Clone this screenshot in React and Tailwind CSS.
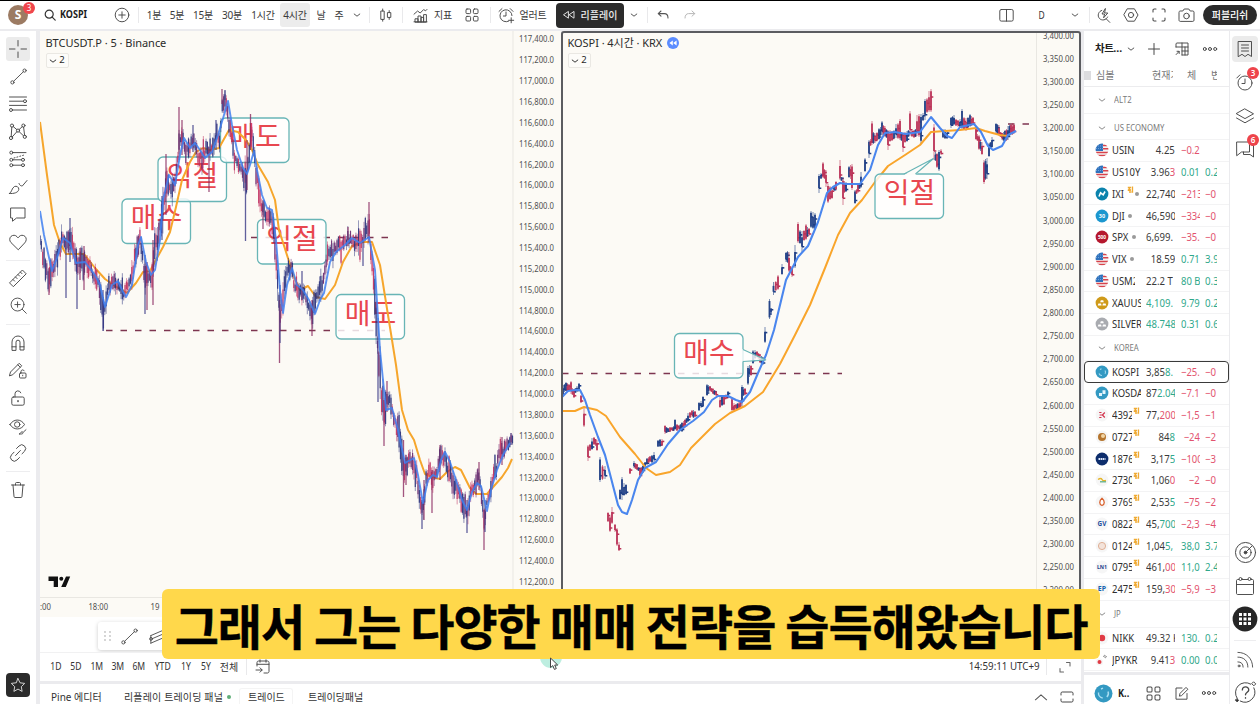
import React from "react";

const UI = "font-['Noto_Sans','Noto_Sans_CJK_KR',sans-serif]";
const NAVY = "#1f3f86";
const RED = "#bb3358";

/* ---------- helpers ---------- */
function Ico({ s = 20, w = 0.95, c = "#484848", children, vb = 20, fill = "none" }) {
  return (
    <svg width={s} height={s} viewBox={`0 0 ${vb} ${vb}`} fill={fill} stroke={c} strokeWidth={w} strokeLinecap="round" strokeLinejoin="round" className="shrink-0">
      {children}
    </svg>
  );
}
const Chevron = ({ s = 8, up = false, c = "#555", w = 1 }) => (
  <Ico s={s} vb={8} w={w} c={c}>
    <path d={up ? "M0.8 5.6 4 2.8 7.2 5.6" : "M1.200 3 4 5.2 6.800 3"} />
  </Ico>
);
const Cell = ({ w, children, className = "" }) => (
  <div className={`flex shrink-0 items-center justify-center ${w} ${className}`}>{children}</div>
);
const Sep = ({ w, at = "justify-center" }) => (
  <div className={`flex h-[16px] shrink-0 ${at} ${w}`}>
    <div className="w-px bg-[#e9e9eb]" />
  </div>
);
const Four = ({ s = 14 }) => (
  <Ico s={s} vb={14} w={0.95}>
    <rect x="1" y="1" width="4.6" height="4.6" rx="1" />
    <rect x="8.4" y="1" width="4.6" height="4.6" rx="1" />
    <rect x="1" y="8.4" width="4.6" height="4.6" rx="1" />
    <rect x="8.4" y="8.4" width="4.6" height="4.6" rx="1" />
  </Ico>
);
const Dots = () => (
  <Ico s={16} vb={16} w={1}>
    <circle cx="2.8" cy="8" r="1.5" />
    <circle cx="8" cy="8" r="1.5" />
    <circle cx="13.2" cy="8" r="1.5" />
  </Ico>
);

/* ---------- header ---------- */
function Header() {
  const t = "text-[10px] text-[#3a3a3a] whitespace-nowrap tracking-[-0.2px]";
  return (
    <header className="flex h-[28px] shrink-0 items-center bg-white">
      <Cell w="w-[36px]" className="relative">
        <div className="flex h-[20px] w-[20px] items-center justify-center rounded-full bg-[#9c7b63] text-[12px] font-bold text-white">S</div>
        <div className="absolute top-[-3px] left-[23px] flex h-[12px] w-[12px] items-center justify-center rounded-full bg-[#f0464c] text-[8px] text-white">3</div>
      </Cell>
      <div className="flex w-[70px] shrink-0 items-center pl-[8px]">
        <Ico s={12} vb={12} w={1.2} c="#333">
          <circle cx="5.2" cy="5.2" r="4" />
          <path d="m8.2 8.2 3 3" />
        </Ico>
        <span className="ml-[4px] origin-left scale-x-[.86] text-[10.5px] font-bold text-[#1d1d1d]">KOSPI</span>
      </div>
      <Cell w="w-[32px]">
        <Ico s={16} vb={16}>
          <circle cx="8" cy="8" r="6.8" />
          <path d="M8 4.8v6.4M4.8 8h6.4" />
        </Ico>
      </Cell>
      <Sep w="w-[4px]" at="justify-start" />
      <Cell w="w-[24px]" className={t}>1분</Cell>
      <Cell w="w-[22px]" className={t}>5분</Cell>
      <Cell w="w-[30px]" className={t}>15분</Cell>
      <Cell w="w-[28px]" className={t}>30분</Cell>
      <Cell w="w-[34px]" className={t}>1시간</Cell>
      <Cell w="w-[30px]" className={`${t} h-[24px] rounded-[3px] bg-[#ececec]`}>4시간</Cell>
      <Cell w="w-[22px]" className={t}>날</Cell>
      <Cell w="w-[14px]" className={t}>주</Cell>
      <Cell w="w-[22px]"><Chevron /></Cell>
      <Sep w="w-[2px]" />
      <Cell w="w-[32px]">
        <Ico s={14} vb={14}>
          <rect x="2.2" y="3" width="3" height="8.4" />
          <path d="M3.7 1v2M3.7 11.4v1.8M10.2 2.6v2M10.2 9.4v2" />
          <rect x="8.8" y="4.6" width="3" height="4.8" />
        </Ico>
      </Cell>
      <Sep w="w-[6px]" at="justify-start" />
      <Cell w="w-[24px]">
        <Ico s={15} vb={15}>
          <path d="M1 6.2 4.6 3l2.6 2 3.4-3.4 2 1.2L14 1.4" />
          <path d="M2 13.8v-3h3v3zM5 13.8V8h3v5.8zM8 13.8V9.4h2.6v4.4zM10.6 13.8V6.6h2.8v7.2zM1 13.8h13" />
        </Ico>
      </Cell>
      <Cell w="w-[22px]" className={t}>지표</Cell>
      <Cell w="w-[36px]"><Four /></Cell>
      <Sep w="w-[4px]" at="justify-start" />
      <Cell w="w-[24px]">
        <Ico s={17} vb={17}>
          <path d="M10.6 14.2A6 6 0 1 1 14 8.6" />
          <path d="M8 5v4H5.4M1 4.4 4 1.6M12.200 1.6 15 4.4M13.200 10.8v5M10.7 13.300h5" />
        </Ico>
      </Cell>
      <Cell w="w-[30px]" className={t}>얼러트</Cell>
      <div className="ml-[8px] flex h-[25px] w-[68px] shrink-0 items-center justify-center gap-[6px] rounded-[4px] bg-[#2b2b2b]">
        <Ico s={12} vb={12} w={1} c="#e0e0e0">
          <path d="M5.4 2.8v6.4L.8 6zM11 2.8v6.4L6.4 6z" />
        </Ico>
        <span className="text-[10px] font-medium whitespace-nowrap text-[#ececec]">리플레이</span>
      </div>
      <Cell w="w-[20px]"><Chevron /></Cell>
      <Sep w="w-[4px]" at="justify-end" />
      <Cell w="w-[30px]">
        <Ico s={12} vb={12} w={1.05} c="#555">
          <path d="M4 2 1.2 4.6 4 7.2M1.2 4.6h6.2c2.2 0 3.6 1.6 3.6 4.4" />
        </Ico>
      </Cell>
      <Cell w="w-[24px]">
        <Ico s={12} vb={12} w={1} c="#b8b8b8">
          <path d="m8 2 2.8 2.6L8 7.2M10.8 4.6H4.6C2.4 4.6 1 6.2 1 9" />
        </Ico>
      </Cell>
      <div className="flex-1" />
      <Cell w="w-[32px]">
        <Ico s={15} vb={15}>
          <rect x=".8" y="1.5" width="13.4" height="11.6" rx="1.5" />
          <path d="M7.5 1.5v11.6" />
        </Ico>
      </Cell>
      <Cell w="w-[40px]" className="text-[10px] text-[#333]"><span className="scale-x-[.85]">D</span></Cell>
      <Cell w="w-[26px]"><Chevron /></Cell>
      <Sep w="w-[2px]" />
      <Cell w="w-[27px]">
        <Ico s={15} vb={15}>
          <path d="M5.8 2.4a4.900 4.900 0 1 0 5.800 6.600M10.2 10.8l3.6 3.6" />
          <path d="M9.2.8 6 6h2.600L7.600 9.800 11.800 5H9z" />
        </Ico>
      </Cell>
      <Cell w="w-[28px]">
        <Ico s={16} vb={16}>
          <path d="M4.6 1.8h6.8L15 8l-3.600 6.200H4.600L1 8z" />
          <circle cx="8" cy="8" r="2.6" />
        </Ico>
      </Cell>
      <Cell w="w-[28px]">
        <Ico s={14} vb={14} w={1.05}>
          <path d="M1 4V2.2C1 1.5 1.5 1 2.2 1H4M10 1h1.8c.7 0 1.200.5 1.200 1.200V4M13 10v1.800c0 .7-.5 1.200-1.200 1.200H10M4 13H2.200C1.500 13 1 12.500 1 11.800V10" />
        </Ico>
      </Cell>
      <Cell w="w-[26px]">
        <Ico s={17} vb={17}>
          <path d="M1 5.200c0-.7.5-1.200 1.200-1.200h2.600l1.400-2h4.600l1.400 2h2.600c.7 0 1.200.5 1.200 1.200v8c0 .7-.5 1.200-1.200 1.200H2.200c-.7 0-1.200-.5-1.200-1.200z" />
          <circle cx="8.5" cy="9" r="2.8" />
        </Ico>
      </Cell>
      <div className="mr-[3px] ml-[4px] flex h-[20px] w-[54px] shrink-0 items-center justify-center rounded-full bg-[#2b2b2b] text-[10px] font-medium tracking-[-0.1px] whitespace-nowrap text-white">퍼블리쉬</div>
    </header>
  );
}

/* ---------- drawing tools rail ---------- */
const Tool = ({ children, active = false }) => (
  <div className="flex h-[27.5px] w-[36px] shrink-0 items-center justify-center">
    <div className={`flex h-[24px] w-[24px] items-center justify-center rounded-[3px] ${active ? "bg-[#ebebeb]" : ""}`}>{children}</div>
  </div>
);
const RailSep = ({ h }) => (
  <div className={`flex w-[36px] shrink-0 items-center justify-center ${h}`}>
    <div className="h-px w-[24px] bg-[#ededef]" />
  </div>
);
function LeftRail() {
  return (
    <aside className="flex w-[36px] shrink-0 flex-col bg-white pt-[4.5px]">
      <Tool active><Ico><path d="M10 1.5v5.500M10 13v5.500M1.500 10H7M13 10h5.500" /></Ico></Tool>
      <Tool><Ico s={19}><circle cx="3.6" cy="16.2" r="1.7" /><circle cx="16.4" cy="3.8" r="1.7" /><path d="M4.9 15 15.1 5" /></Ico></Tool>
      <Tool><Ico><path d="M1.5 3h17M1.5 7.2h13.8M1.5 11.4h17M4.7 16h13.8" /><circle cx="17" cy="7.2" r="1.5" /><circle cx="3" cy="16" r="1.5" /></Ico></Tool>
      <Tool><Ico><circle cx="4" cy="3.6" r="1.6" /><circle cx="10" cy="8.6" r="1.6" /><circle cx="15.4" cy="3.6" r="1.6" /><circle cx="3" cy="16" r="1.6" /><circle cx="16.8" cy="14.8" r="1.6" /><path d="M3.8 5.2 3.2 14.4M5.3 4.6l3.5 3M11.2 7.5l3.1-2.9M15.6 5.2l1 8M4.2 14.9l4.7-5.2M11.2 9.7l4.3 4.1" /></Ico></Tool>
      <Tool><Ico><path d="M5 3.6h13M5 10.800h8.500M5 16.200h8.500" /><path d="M6 9 15.500 6.200" strokeDasharray="1 2" /><circle cx="3.3" cy="3.6" r="1.5" /><circle cx="3.3" cy="10.8" r="1.5" /><circle cx="3.3" cy="16.2" r="1.5" /><circle cx="15" cy="10.8" r="1.5" /><circle cx="15" cy="16.200" r="1.5" /></Ico></Tool>
      <Tool><Ico><path d="M1.5 16.500C4 15.500 3.500 11 6.500 9.500c2-.9 4.500.6 4.300 2.800-.4 3.400-5 4.500-9.300 4.200zM11 6.500c.8 2 1.900 2.600 3.400 2.400L19 3.500" /></Ico></Tool>
      <Tool><Ico><path d="M3 4h14v10H8.500L4.500 17.200V14H3z" /></Ico></Tool>
      <Tool><Ico><path d="M10 17.500 3 10.600C1.300 8.800 1.300 6 3 4.400c1.800-1.600 4.500-1.500 6 .3l1 1.200 1-1.200c1.500-1.800 4.200-1.900 6-.3 1.700 1.600 1.700 4.400 0 6.200z" /></Ico></Tool>
      <RailSep h="h-[9px]" />
      <Tool><Ico><path d="M1.8 14.600 14.400 2l3.800 3.800L5.600 18.400zM5 11.500l1.600 1.600M7.500 9l1.600 1.600M10 6.500l1.600 1.600M12.400 4.100 14 5.700" /></Ico></Tool>
      <Tool><Ico s={19}><circle cx="9" cy="9" r="6.8" /><path d="M14 14l4.200 4.200M9 6.200v5.600M6.200 9h5.600" /></Ico></Tool>
      <RailSep h="h-[10px]" />
      <Tool><Ico><path d="M4 17V9a6 6 0 0 1 12 0v8h-4V9.200a2 2 0 0 0-4 0V17zM4 13.800h4M12 13.800h4" /></Ico></Tool>
      <Tool><Ico><path d="M1.500 14.500 2.500 11 11.200 2.300l2.500 2.500L5 13.500zM9.800 3.800l2.500 2.500" /><rect x="11.5" y="12" width="6.5" height="5" rx="1" /><path d="M13 12v-1.600a1.700 1.700 0 0 1 3.200-.6M14.700 14.200v.6" /></Ico></Tool>
      <Tool><Ico><rect x="3.8" y="9" width="12.4" height="8.2" rx="1.5" /><path d="M7 9V5.800a3 3 0 0 1 5.800-1" /><path d="M10 12.800v.8" strokeWidth="1.500" /></Ico></Tool>
      <Tool><Ico><path d="M2 8.500C5.500 2.500 13 2.500 16.500 8.500 13 14.500 5.500 14.500 2 8.500z" /><circle cx="9.2" cy="8.5" r="2.7" /><path d="M11.500 18c1.200-.2 1-2 2.400-2.200.9 0 1.500.8 1.100 1.400-.6.900-2 .9-3.500.8zM15.500 16l2.500-2.300" /></Ico></Tool>
      <Tool><Ico><path d="M8.500 5.500 11 3a3.700 3.700 0 0 1 5.500 5.300L14 10.800M11.500 14.500 9 17a3.700 3.700 0 0 1-5.400-5.300L6 9.200M7.600 12.500l4.800-5" /></Ico></Tool>
      <RailSep h="h-[9px]" />
      <Tool><Ico><path d="M3.500 5h13M7.500 5V3.500c0-.6.4-1 1-1h3c.6 0 1 .4 1 1V5M5 5l1 11.500c0 .6.4 1 1 1h6c.6 0 1-.4 1-1L15 5" /></Ico></Tool>
      <div className="mt-auto mb-[7px] flex justify-center">
        <div className="flex h-[24px] w-[24px] items-center justify-center rounded-[4px] bg-[#2b2b2b]">
          <Ico s={16} vb={16} c="#d8d8d8"><path d="m8 1.500 2 4.300 4.700.6-3.400 3.300.8 4.700L8 12.100l-4.100 2.300.8-4.700L1.300 6.400 6 5.800z" /></Ico>
        </div>
      </div>
    </aside>
  );
}

/* ---------- chart data ---------- */
const range5m = [
  [40,230,250],[45,252,280],[49,262,296],[52,258,282],[57,245,275],[62,224,250],[66,236,250],[70,222,255],[74,240,265],[78,250,285],[84,246,272],[90,254,280],[94,262,290],[98,268,292],[101,282,318],[103,298,331],[106,285,318],[109,276,300],[114,270,292],[119,278,296],[124,284,306],[128,276,295],[132,264,288],[136,240,270],[140,226,252],[143,250,275],[146,262,300],[149,268,282],[152,262,290],[154,238,270],[158,225,250],[162,195,235],[165,163,208],[168,172,200],[172,176,206],[176,168,192],[179,118,160],[182,128,152],[186,142,165],[190,136,156],[193,128,150],[197,142,165],[202,148,172],[207,138,162],[212,142,160],[216,124,148],[220,128,145],[223,89,110],[226,94,118],[230,116,138],[233,138,162],[238,156,175],[243,162,182],[246,160,200],[249,140,165],[251,118,142],[254,138,160],[257,165,198],[261,190,218],[265,202,226],[270,207,226],[274,216,248],[278,262,312],[280,292,340],[283,270,315],[287,256,290],[291,254,278],[295,276,300],[300,282,303],[305,286,305],[309,296,318],[312,302,330],[315,286,312],[319,282,310],[323,272,294],[326,250,272],[330,242,262],[336,238,256],[342,236,252],[348,232,248],[354,232,250],[360,230,255],[365,228,245],[369,208,242],[372,242,285],[375,272,330],[378,322,388],[381,370,422],[384,396,442],[387,382,412],[390,388,418],[394,405,430],[398,412,445],[402,430,475],[405,455,492],[409,446,470],[413,450,475],[417,465,496],[420,490,520],[423,492,525],[426,470,490],[429,456,480],[432,464,495],[436,468,480],[440,446,470],[445,448,465],[449,456,488],[453,470,500],[458,480,505],[463,490,520],[467,500,528],[471,480,505],[475,474,495],[479,466,488],[482,480,518],[484,500,538],[487,495,512],[491,475,500],[495,460,484],[500,442,465],[505,440,458],[510,435,448],[513,434,442],
];
const wicks5m = [[49,268,295,1],[66,248,298,0],[70,218,262,0],[77,262,309,0],[80,248,280,1],[84,246,290,1],[103,290,331,0],[145,255,314,0],[147,262,310,1],[153,240,305,1],[162,196,240,0],[166,154,215,1],[179,107,160,1],[182,120,155,1],[193,125,152,0],[209,150,192,1],[216,120,150,0],[222,89,104,1],[225,90,100,0],[245.5,168,241,0],[247,140,190,1],[250.5,114,150,1],[263,200,229,1],[279.5,300,363,1],[280,285,343,0],[302,271,300,0],[312,300,336,1],[348,227,246,1],[369,202,242,1],[363,240,266,0],[378,318,402,0],[384,400,446,1],[387,381,412,1],[403.5,440,497,1],[406,455,485,1],[422,500,529,0],[424,480,520,1],[432,470,513,1],[440,445,480,1],[467,500,533,0],[479,462,490,1],[484,510,550,1],[485,500,532,0],[502,437,465,1],[511,433,445,0]];

function buildBars() {
  let seed = 17;
  const rnd = () => ((seed = (seed * 16807) % 2147483647), seed / 2147483647);
  const out = [];
  let i = 0;
  for (let x = 40; x < 513; x += 1.35) {
    while (i < range5m.length - 2 && range5m[i + 1][0] < x) i++;
    const a = range5m[i], b = range5m[i + 1];
    const f = (x - a[0]) / (b[0] - a[0]);
    const hi = a[1] + (b[1] - a[1]) * f, lo = a[2] + (b[2] - a[2]) * f, len = lo - hi;
    const spike = rnd() > 0.82 ? 4 + rnd() * 8 : 0;
    const side = rnd() > 0.5;
    const top = hi - 2 + len * rnd() * 0.42 - (side ? spike : 0);
    const bot = lo + 2 - len * rnd() * 0.42 + (side ? 0 : spike);
    const q = (bot - top) * (0.05 + rnd() * 0.28);
    const k = rnd();
    out.push({ x, top, bot, bt: top + q * 0.8, bb: bot - q, c: k > 0.6 ? "#29307c" : k > 0.35 ? "#6a2a70" : "#c02f60" });
  }
  return out;
}
const bars5m = buildBars();

const day4h = [
  [563,385,397,0],[566,382,391,0],[569,384,391,1],[571,381,394,1],[574,389,398,1],[577,386,392,0],[579,383,391,0],[581,395,403,1],[584,408,427,1],[588,445,461,1],[592,438,450,0],[594,437,445,1],[597,440,451,1],[600,457,482,0],[605,466,479,0],[608,512,522,1],[610,516,532,1],[612,507,524,1],[615,524,532,1],[617,528,546,1],[619,542,551,1],[620,489,500,0],[622,477,500,0],[626,484,495,0],[630,468,474,1],[634,461,468,0],[637,464,470,1],[640,468,478,1],[643,463,473,0],[647,458,465,0],[650,456,462,1],[654,452,462,0],[658,440,447,0],[662,439,446,1],[665,425,434,1],[668,428,432,0],[672,427,431,1],[675,419,430,0],[679,425,430,1],[682,422,432,0],[685,419,428,1],[688,413,422,0],[692,410,417,1],[695,411,417,1],[699,402,411,0],[703,396,407,0],[707,384,396,0],[710,386,391,1],[713,389,394,1],[716,391,396,1],[720,397,408,1],[724,395,405,1],[728,391,398,0],[732,398,411,1],[736,404,410,1],[739,401,409,1],[742,385,406,0],[745,388,395,1],[748,366,385,0],[751,365,376,1],[753,350,364,0],[757,351,358,1],[760,354,363,1],[763,357,365,0],[765,327,343,0],[769.5,299,319,0],[771,308,313,0],[773.5,282,295,0],[778,275,290,1],[782,264,275,0],[786,252,262,0],[789,252,272,1],[792,268,277,1],[795,245,268,0],[798,222,243,1],[802,231,252,0],[806,224,240,1],[809,228,236,1],[811,211,228,0],[815,213,230,0],[819,174,193,0],[823,162,178,1],[826,170,187,1],[828,184,203,1],[832,187,199,1],[836,181,190,1],[840,160,180,1],[843,178,205,1],[846,182,192,0],[849,166,178,0],[852,164,190,1],[855,190,204,0],[858,184,193,1],[861,172,188,0],[865,158,172,0],[869,140,158,0],[872,121,145,1],[875,133,143,1],[879,128,140,0],[882,121,135,0],[885,126,137,1],[888,130,150,1],[892,131,141,1],[896,124,138,0],[900,119,140,1],[903,133,152,1],[907,131,142,0],[910,111,136,1],[914,130,138,1],[917,115,136,1],[921,114,143,0],[925,99,120,0],[929,91,112,1],[931,89,112,1],[934,124,160,1],[937,153,168,1],[939,150,171,0],[941,149,155,1],[943,129,138,0],[947,130,139,0],[951,117,128,0],[954,115,125,0],[958,120,127,1],[962,109,129,0],[966,118,131,1],[970,114,127,0],[973,117,125,1],[976,126,140,1],[979,135,150,1],[982,142,155,1],[984,160,184,1],[987,158,179,0],[989,143,157,0],[992,137,147,0],[996,123,134,0],[999,125,136,1],[1002,133,140,1],[1005,130,141,0],[1008,126,140,0],[1011,124,135,1],[1014,124,134,1],
];
/* a second session bar wherever two neighbouring ranges meet */
const bars4h = day4h.flatMap((b, i) => {
  const n = day4h[i + 1];
  if (!n || n[0] - b[0] < 3) return [b];
  const hi = Math.max(b[1], n[1]), lo = Math.min(b[2], n[2]);
  if (lo - hi < 2) return [b];
  return [b, [(b[0] + n[0]) / 2, hi - 1, lo + 1, i % 2]];
});

const P = (s) => "M" + s;
const orangeA = P("40 122 47 175 54 225 60 243 66 254 84 254 95 268 105 279 115 286 127 293 136 283 143 272 150 271 157 258 163 247 170 232 176 207 182 180 190 162 196 152 203 148 210 150 219 148 229 130 238 132 246 140 252 150 258 165 268 182 275 200 279 230 286 252 294 277 300 290 308 286 316 297 325 299 335 285 343 262 352 246 362 242 372 242 380 265 388 315 396 365 402 410 408 430 414 440 420 460 425 474 432 477 440 479 447 472 455 467 461 470 470 488 476 494 487 494 494 486 502 477 508 468 512 459");
const blueA = P("40 211 44 235 52 271 57 258 63 238 70 243 76 263 85 262 95 275 100 285 105 307 112 285 118 281 122 290 126 297 132 285 138 245 141 237 146 262 151 275 155 270 160 240 163 200 169 175 175 185 180 155 184 138 190 148 195 143 200 150 205 158 212 152 218 135 224 115 228 101 232 125 237 150 243 168 247 174 250 165 254 151 257 170 262 195 267 208 272 210 276 240 280 290 283 313 287 285 292 268 297 285 303 290 309 300 315 314 320 300 324 293 330 262 336 252 345 245 352 238 360 243 369 237 375 270 380 350 386 410 392 408 398 430 405 463 414 458 418 475 423 503 428 480 433 475 437 477 441 460 445 452 450 462 456 480 462 500 467 510 472 492 477 483 481 486 487 511 491 490 497 470 503 455 510 443");
const blueB = P("562 397 568 391 575 390 580 390 585 400 590 415 598 437 605 455 611 478 618 505 622 512 627 514 632 500 638 480 645 468 656 462 668 444 680 430 693 421 704 412 712 400 718 396 728 396 736 400 742 402 750 392 758 373 766 355 774 330 786 280 798 257 808 246 818 222 827 193 833 187 840 183 846 184 860 184 870 170 878 145 885 133 895 132 906 134 920 132 931 117 940 128 947 136 952 138 960 127 974 124 981 132 988 146 993 150 1002 146 1008 135 1016 131");
const orangeB = P("562 411 575 411 584 407 597 410 606 416 620 437 635 454 646 468 656 475 670 472 680 465 691 448 705 434 715 424 730 413 745 406 763 392 780 364 795 335 810 305 825 268 838 235 850 213 862 200 875 182 888 166 905 155 920 145 931 132 945 131 960 130 976 128 985 131 1000 135 1008 136");

function Note({ x, y, text, tail }) {
  return (
    <g>
      <rect x={x} y={y} width="68.5" height="44.5" rx="5" fill="#fff" fillOpacity=".82" stroke="#68b5b6" strokeWidth="1.300" />
      {tail}
      <text x={x + 34.5} y={y + 29} textAnchor="middle" fontSize="28" fill="#e8474f" fontFamily="'Noto Sans CJK KR', sans-serif">{text}</text>
    </g>
  );
}
const AxisText = ({ x, y, w, children }) => (
  <text x={x} y={y + 3.3} fontSize="9.3" fill="#505050" textLength={w} lengthAdjust="spacingAndGlyphs" fontFamily="'Noto Sans', sans-serif">{children}</text>
);
const dash = { stroke: "#7d3550", strokeWidth: 1.5, strokeDasharray: "6.5 8", fill: "none" };
const fmt = (n, d) => n.toLocaleString("en-US", { minimumFractionDigits: d, maximumFractionDigits: d });

function ChartTitle({ children }) {
  return (
    <div className="flex flex-col items-start">
      <div className="flex h-[16px] items-center text-[11px] whitespace-nowrap text-[#2a2a2a]">{children}</div>
      <div className="mt-[2px] flex h-[15px] w-[23px] items-center justify-center gap-[2px] rounded-[2px] border border-[#eae8e3] bg-[#fdfcf9] text-[9.5px] text-[#2a2a2a]">
        <Chevron c="#333" />2
      </div>
    </div>
  );
}

function LeftChart() {
  return (
    <section className="grid w-[521px] shrink-0 bg-[#fcfaf5]">
      <svg viewBox="40 31 521 586" width="521" height="586" className="col-start-1 row-start-1">
        <path d="M513 31V597" stroke="#e9e7e2" />
        <path d="M40 597.5H561" stroke="#e9e7e2" />
        <path d="M106 330.500H385M251 237.500H388" {...dash} />
        <Note x={122} y={199} text="매수" />
        <Note x={158} y={157} text="익절" />
        <Note x={220.5} y={118} text="매도" />
        <Note x={257.5} y={219.5} text="익절" />
        <Note x={336} y={294.5} text="매도" />
        <path d={orangeA} fill="none" stroke="#f6a62c" strokeWidth="2" strokeLinejoin="round" />
        {bars5m.map((b, i) => (
          <g key={i} stroke={b.c}>
            <path d={`M${b.x} ${b.top}V${b.bot}`} strokeWidth=".8" opacity=".65" />
            <path d={`M${b.x} ${b.bt}V${b.bb}`} strokeWidth="1.2" opacity=".85" />
          </g>
        ))}
        {wicks5m.map(([x, a, b, r], i) => (
          <path key={i} d={`M${x} ${a}V${b}`} stroke={r ? "#8c2c62" : "#3a3a86"} strokeWidth="1.3" opacity=".8" />
        ))}
        <path d={blueA} fill="none" stroke="#3f7ff0" strokeWidth="1.9" strokeLinejoin="round" opacity=".85" />
        {Array.from({ length: 27 }, (_, i) => (
          <AxisText key={i} x={519} y={39 + i * 20.87} w={35}>{fmt(117400 - i * 200, 1)}</AxisText>
        ))}
        <AxisText x={40} y={607} w={11}>:00</AxisText>
        <AxisText x={88.5} y={607} w={19.5}>18:00</AxisText>
        <AxisText x={150.5} y={607} w={9}>19</AxisText>
        <path d="M48.5 576.500h9.500v10.500h-4.300v-6h-5.200zM66 576.500h4.200L65.800 587h-4.600z" fill="#111" />
        <circle cx="61.3" cy="578.8" r="2" fill="#111" />
      </svg>
      <div className="z-10 col-start-1 row-start-1 pt-[4px] pl-[5.5px]">
        <ChartTitle><span className="tracking-[-0.04px]">BTCUSDT.P · 5 · Binance</span></ChartTitle>
      </div>
    </section>
  );
}

function RightChart() {
  return (
    <section className="grid w-[520px] shrink-0 overflow-hidden rounded-[3px] border-2 border-[#5b5c60] bg-[#fcfaf5]">
      <svg viewBox="563 33 516 582" width="516" height="582" className="col-start-1 row-start-1">
        <path d="M1036.5 33V615" stroke="#e9e7e2" />
        <path d="M562 373.500H842M1008 124H1030" {...dash} />
        {bars4h.map(([x, hi, lo, r], i) => {
          const l = lo - hi;
          return (
            <g key={i} stroke={r ? RED : NAVY}>
              <path d={`M${x} ${hi}V${lo}`} strokeWidth=".9" opacity=".65" />
              <path d={`M${x} ${hi + l * (i % 3 === 0 ? 0.3 : 0.1)}V${lo - l * (i % 4 === 1 ? 0.25 : 0.08)}`} strokeWidth="1.9" opacity=".92" />
              <path d={i % 2 ? `M${x} ${lo - l * 0.25}h2.300` : `M${x} ${hi + l * 0.35}h2.300`} strokeWidth="1.6" />
            </g>
          );
        })}
        <path d={orangeB} fill="none" stroke="#f9a52b" strokeWidth="2" strokeLinejoin="round" />
        <path d={blueB} fill="none" stroke="#4a86ee" strokeWidth="2.1" strokeLinejoin="round" />
        <Note x={674.5} y={333.5} text="매수" tail={<g><path d="M742 349 766 360 742 361.500" fill="#fff" fillOpacity=".8" /><path d="M743 349.500 766 360 743 361.500" fill="none" stroke="#68b5b6" strokeWidth="1.2" /></g>} />
        <Note x={875} y={174} text="익절" tail={<g><path d="M904 175 933.500 158 915.500 175z" fill="#fdfcf9" /><path d="M904 174 933.500 158.500 915.500 174" fill="none" stroke="#68b5b6" strokeWidth="1.2" /></g>} />
        {Array.from({ length: 25 }, (_, i) => (
          <AxisText key={i} x={1043} y={35.3 + i * 23.12} w={31}>{fmt(3400 - i * 50, 2)}</AxisText>
        ))}
      </svg>
      <div className="z-10 col-start-1 row-start-1 pt-[2px] pl-[4.5px]">
        <ChartTitle>
          <span className="tracking-[-0.05px]">KOSPI · 4시간 · KRX</span>
          <span className="ml-[5px] flex h-[12px] w-[12px] items-center justify-center rounded-full bg-[#5b8cff]">
            <svg width="8" height="6" viewBox="0 0 8 6" fill="#fff"><path d="M3.8.4v5.200L.4 3zM7.600.4v5.200L4.200 3z" /></svg>
          </span>
        </ChartTitle>
      </div>
    </section>
  );
}

/* ---------- bottom ---------- */
function Bottom() {
  const t = "text-[10.5px] text-[#333]";
  const r = (w, s) => <Cell w={w} className={t}><span className="scale-x-[.82]">{s}</span></Cell>;
  return (
    <>
      <div className="flex h-[35px] shrink-0 bg-white pt-[5px] pl-[58px]">
        <div className="flex h-[28px] w-[400px] items-center rounded-[3px] bg-white pl-[4px] shadow-[0_1px_4px_rgba(0,0,0,0.2)]">
          <svg width="12" height="14" viewBox="0 0 12 14" fill="#c2c2c2">
            <circle cx="3" cy="3" r=".9" /><circle cx="8" cy="3" r=".9" /><circle cx="3" cy="7" r=".9" /><circle cx="8" cy="7" r=".9" /><circle cx="3" cy="11" r=".9" /><circle cx="8" cy="11" r=".9" />
          </svg>
          <Cell w="w-[31px]"><Ico s={19}><circle cx="3.6" cy="16.2" r="1.7" /><circle cx="16.4" cy="3.8" r="1.7" /><path d="M4.9 15 15.1 5" /></Ico></Cell>
          <Cell w="w-[24px]"><Ico s={19}><path d="M3 9 17 3M4 12.500 18 6.500M3 17l14-6M3 9v8" /><circle cx="3.2" cy="12.5" r="1.5" /></Ico></Cell>
        </div>
      </div>
      <div className="flex h-[29px] shrink-0 items-center border-t border-[#f1f1f2] bg-white pl-[6px]">
        {r("w-[20px]", "1D")}{r("w-[20px]", "5D")}{r("w-[22px]", "1M")}{r("w-[20px]", "3M")}{r("w-[22px]", "6M")}{r("w-[26px]", "YTD")}{r("w-[20px]", "1Y")}{r("w-[19px]", "5Y")}
        <Cell w="w-[28px]" className="text-[10px] text-[#333]">전체</Cell>
        <Sep w="w-[6px]" />
        <Cell w="w-[28px]">
          <Ico s={16} vb={16}>
            <path d="M2 7V3.500C2 2.700 2.700 2 3.500 2h9c.8 0 1.500.7 1.500 1.500V12.500c0 .8-.7 1.500-1.500 1.500H9M2 5.300h12M5 .8v2.400M11 .8v2.400M1 11h6M5 8.800 7.200 11 5 13.200" />
          </Ico>
        </Cell>
        <div className="flex-1" />
        <Cell w="w-[78px]" className="text-[10.5px] whitespace-nowrap text-[#333]"><span className="scale-x-[.93]">14:59:11 UTC+9</span></Cell>
        <Sep w="w-[6px]" />
        <Cell w="w-[32px]"><Ico s={14} vb={14} w={1.05} c="#666"><path d="M8.5 2.500H12v3.500M2 8.500V12h3.500" /></Ico></Cell>
      </div>
      <div className="mt-[3px] flex flex-1 items-center bg-white pt-[4px] pl-[11px] text-[10px] whitespace-nowrap text-[#333]">
        <span className="w-[73px]">Pine 에디터</span>
        <span className="w-[103px] tracking-[0.15px]">리플레이 트레이딩 패널</span>
        <span className="h-[4px] w-[4px] rounded-full bg-[#5fae78]" />
        <span className="ml-[8px] flex h-[18px] w-[54px] items-center rounded-t-[3px] border border-b-0 border-[#f4f4f4] pl-[8px]">트레이드</span>
        <span className="ml-[15px]">트레이딩패널</span>
        <div className="flex-1" />
        <Cell w="w-[26px]"><Chevron s={14} up w={0.6} /></Cell>
        <Cell w="w-[26px]"><Ico s={14} vb={14} w={1}><path d="M1 5V3.200C1 2.500 1.500 2 2.200 2h9.600c.7 0 1.200.5 1.200 1.200V5M13 9v1.800c0 .7-.5 1.200-1.200 1.200H2.200C1.500 12 1 11.500 1 10.800V9" /></Ico></Cell>
        <div className="w-[1px]" />
      </div>
    </>
  );
}

/* ---------- watchlist ---------- */
const K = "#3a3a3a", G = "#2fa88b", R = "#e2536e";
const us = [
  ["us", "USIN", "", "4.25", "", K, "−0.2", "", R],
  ["us", "US10Y", "", "3.96", "3", R, "0.01", "0.2", G],
  ["ixi", "IXI", "jd", "22,740", "", K, "−213", "−0", R],
  ["dji", "DJI", "d", "46,590", "", K, "−334", "−0", R],
  ["spx", "SPX", "d", "6,699.", "", K, "−35.", "−0", R],
  ["us", "VIX", "d", "18.59", "", K, "0.71", "3.9", G],
  ["us", "USM2", "c", "22.2 T", "", K, "80 B", "0.3", G],
  ["gold", "XAUUS", "", "", "4,109.", G, "9.79", "0.2", G],
  ["silver", "SILVER", "", "", "48.748", G, "0.31", "0.6", G],
];
const kr = [
  ["kospi", "KOSPI", "", "3,85", "8.", G, "−25.", "−0", R],
  ["kosdaq", "KOSDA", "", "87", "2.04", G, "−7.1", "−0", R],
  ["k1", "4392", "j", "77,", "200", R, "−1,5", "−1", R],
  ["k2", "0727", "j", "84", "8", G, "−24", "−2", R],
  ["k3", "1876", "j", "3,17", "5", G, "−100", "−3", R],
  ["k4", "2730", "j", "1,06", "0", R, "−2", "−0", R],
  ["k5", "3769", "j", "2,53", "5", G, "−75", "−2", R],
  ["k6", "0822", "j", "45,", "700", G, "−2,3", "−4", R],
  ["k7", "0124", "j", "1,04", "5,", G, "38,0", "3.7", G],
  ["k8", "0795", "j", "461,", "00", R, "11,0", "2.4", G],
  ["k9", "2475", "j", "159,", "30", R, "−5,9", "−3", R],
];
const jp = [
  ["jp", "NIKK", "", "49.32 K", "", K, "130.", "0.2", G],
  ["jpk", "JPYKR", "", "9.41", "3", R, "0.00", "0.0", G],
];

function Logo({ id }) {
  const disc = { cx: 7, cy: 7, r: 6.4 };
  const word = (s, f, size = 5.5) => <text x="7" y="9" textAnchor="middle" fontSize={size} fontWeight="700" fill={f} fontFamily="'Noto Sans', sans-serif">{s}</text>;
  const pale = <circle {...disc} fill="#f6f6f6" />;
  const bars = <path d="M5.2 6.200 5.800 4.200h2.400l.6 2zM2.800 9.400l.6-2h2.600l.6 2zM7.400 9.400l.6-2h2.600l.6 2z" fill="#fff" />;
  const art = {
    us: <><clipPath id="flag"><circle {...disc} /></clipPath><g clipPath="url(#flag)"><path d="M0 0h14v14H0z" fill="#f4f4f4" /><path d="M7 2.500h7M7 5.700h7M0 9.500h14M0 12.500h14" stroke="#d8434c" strokeWidth="1.500" /><path d="M0 0h8v8H0z" fill="#2f72bd" /><path d="M1 3h7M1 5.500h7" stroke="#9cc3ea" strokeWidth=".6" strokeDasharray="1 1" /></g></>,
    ixi: <><circle {...disc} fill="#0b83ad" /><path d="M4 9.500 5.600 5.800l2.600 2L10 4.500" stroke="#fff" strokeWidth="1.600" fill="none" /></>,
    dji: <><circle {...disc} fill="#1c97cf" />{word("30", "#fff")}</>,
    spx: <><circle {...disc} fill="#b5182e" />{word("500", "#fff", 4.8)}</>,
    gold: <><circle {...disc} fill="#cf9a1a" />{bars}</>,
    silver: <><circle {...disc} fill="#a9abb0" />{bars}</>,
    kospi: <><circle {...disc} fill="#3399c2" /><path d="M4 8.500a3 3 0 0 0 3 2M10 5.500a3 3 0 0 1 0 3.400M5 4.500l1.500-.7" stroke="#a6dcf0" strokeWidth="1.100" fill="none" /></>,
    kosdaq: <><circle {...disc} fill="#3399c2" /><path d="M4 7h3v3H4zM7.500 4.200h3V8h-3z" fill="#e2f4fb" /></>,
    k1: <>{pale}<path d="M4.200 4.500h2.300M4.200 9.500h2.300M4.600 7h3M9.800 4.500 7.400 7l2.400 2.500" stroke="#d3324c" strokeWidth="1.200" fill="none" /></>,
    k2: <>{pale}<circle cx="7" cy="7" r="4" fill="#b5752e" /><circle cx="8" cy="6" r="2" fill="#f1d5a4" /></>,
    k3: <><circle {...disc} fill="#0d2d6c" /><path d="M3.5 7h7" stroke="#dce6fa" strokeWidth="2" strokeDasharray="1.600 .5" /></>,
    k4: <>{pale}<path d="M3 6.500q3-2 4 0t4 1" stroke="#e5b52a" strokeWidth="1.500" fill="none" /><path d="M5 8.800h6" stroke="#5fae86" strokeWidth="1.300" /></>,
    k5: <>{pale}<path d="M7 3.300C10 6 10 9.500 7 10.500 4 9.500 4 6 7 3.300z" stroke="#d9622f" strokeWidth="1.300" fill="#fff" /></>,
    k6: <>{pale}{word("GV", "#1e4fa0", 6.4)}</>,
    k7: <>{pale}<circle cx="7" cy="7" r="3.6" fill="#f3e3da" stroke="#dca98c" strokeWidth=".9" /></>,
    k8: <>{pale}{word("LN1", "#24418c", 5.2)}</>,
    k9: <>{pale}{word("EP", "#1763b0", 7)}</>,
    jp: <>{pale}<circle cx="7" cy="7" r="3.2" fill="#e03b45" /></>,
    jpk: <><circle cx="4.5" cy="9" r="3.6" fill="#f6f6f6" /><circle cx="4.5" cy="9" r="2" fill="#e03b45" /><path d="M8 3l3 2M9 2l3 2" stroke="#777" strokeWidth=".8" /></>,
  };
  return <svg width="14" height="14" viewBox="0 0 14 14" className="shrink-0">{art[id]}</svg>;
}

function Row({ d, active = false }) {
  const [id, name, flags, a, b, bc, chg, pct, cc] = d;
  const long = (a + b).length > 5;
  const korean = flags.includes("j");
  const nameW = flags.includes("d") ? "w-auto" : korean ? "w-[19.5px]" : flags.includes("c") ? "w-[23px]" : "w-[28.5px]";
  return (
    <div className={`flex h-[21.75px] shrink-0 items-center text-[11px] leading-[14px] whitespace-nowrap ${active ? "rounded-[4px] border-[1.5px] border-[#3a3a3a] pr-[10.5px] pl-[9.5px]" : "border-b border-[#f3f3f4] pr-[12px] pl-[11px]"}`}>
      <Logo id={id} />
      <div className={`ml-[3px] h-[14px] shrink-0 overflow-hidden text-[#2e2e2e] ${nameW}`}>
        <span className="inline-block origin-left scale-x-[.86]">{name}</span>
      </div>
      {korean && <svg width="7" height="8" viewBox="0 0 7 8" className="mb-[8px] ml-[1.5px] shrink-0"><path d="M.8 1.500h3.400M2.500 1.500C2.500 3 1.800 4 .8 4.600M2.500 3l1.500 1.500M5.500.5v6.200M2 6h2.500" stroke="#efaa33" strokeWidth="1.300" fill="none" /></svg>}
      {flags.includes("d") && <span className="ml-[1px] h-[4px] w-[4px] shrink-0 rounded-full bg-[#9a9a9a]" />}
      <div className="min-w-0 flex-1" />
      <div className={`flex h-[14px] w-[29.5px] shrink-0 overflow-hidden ${long ? "justify-start" : "justify-end"}`}>
        <span className={`inline-block shrink-0 scale-x-[.87] ${long ? "origin-left" : "origin-right"}`}>
          <span className="text-[#3a3a3a]">{a}</span>
          <span style={{ color: bc }}>{b}</span>
        </span>
      </div>
      <div className="ml-[5.5px] flex h-[14px] w-[19.5px] shrink-0 overflow-hidden" style={{ color: cc }}>
        <span className={`inline-block shrink-0 scale-x-[.86] ${chg.length < 4 ? "ml-auto origin-right" : "origin-left"}`}>{chg}</span>
      </div>
      <div className="ml-[4.5px] h-[14px] w-[12.5px] shrink-0 overflow-hidden" style={{ color: cc }}>
        <span className="inline-block origin-left scale-x-[.88]">{pct}</span>
      </div>
    </div>
  );
}
const Group = ({ h, children }) => (
  <div className={`flex shrink-0 items-center border-b border-[#f3f3f4] pl-[14px] text-[9px] text-[#7a7a7a] ${h}`}>
    <Chevron c="#888" />
    <span className="ml-[8px] origin-left scale-x-[.86]">{children}</span>
  </div>
);

function Watchlist() {
  return (
    <aside className="ml-[3px] flex w-[145px] shrink-0 flex-col overflow-hidden">
      <div className="flex h-[641px] shrink-0 flex-col overflow-hidden bg-white">
        <div className="flex h-[35px] shrink-0 items-center pl-[11px]">
          <span className="w-[28px] text-[10.5px] font-bold tracking-[-0.5px] whitespace-nowrap text-[#222]">차트…</span>
          <Cell w="w-[16px]"><Chevron /></Cell>
          <Cell w="w-[30px]"><Ico s={14} vb={14} w={1}><path d="M7 1.500v11M1.500 7h11" /></Ico></Cell>
          <Cell w="w-[26px]"><Ico s={16} vb={16}><path d="M2 6V3c0-.6.4-1 1-1h11v12H8M2 6h12M8 2v12M11 6v8M8 10h6M2.200 13.500 5 10.500M3 10.300h2.200v2.200" /></Ico></Cell>
          <Cell w="w-[30px]"><Dots /></Cell>
        </div>
        <div className="flex h-[20.5px] shrink-0 items-center border-b border-[#ececee] text-[10px] text-[#777]">
          <span className="h-[9px] w-[7px] bg-[#dcdcdf]" />
          <span className="ml-[5px] w-[56px]">심볼</span>
          <span className="w-[21px] overflow-hidden whitespace-nowrap">현재가</span>
          <span className="ml-[14px] w-[24px]">체</span>
          <span className="w-[6px] overflow-hidden">변</span>
        </div>
        <Group h="h-[27px]">ALT2</Group>
        <div className="h-[2.5px] shrink-0" />
        <Group h="h-[24px]">US ECONOMY</Group>
        {us.map((d, i) => <Row key={i} d={d} />)}
        <Group h="h-[25.5px]">KOREA</Group>
        {kr.map((d, i) => <Row key={i} d={d} active={i === 0} />)}
        <Group h="h-[27px]">JP</Group>
        {jp.map((d, i) => <Row key={i} d={d} />)}
      </div>
      <div className="mt-[3px] flex flex-1 items-center bg-white pt-[7px] pl-[10px]">
        <svg width="19" height="19" viewBox="0 0 19 19"><circle cx="9.5" cy="9.5" r="9" fill="#3399c2" /><path d="M4.5 8.500a5 5 0 0 0 4.200 5.500M14 7.500a5 5 0 0 1-1.200 5.500M7 5l2-.8" stroke="#a9def2" strokeWidth="1.400" fill="none" /></svg>
        <span className="ml-[5px] w-[21px] text-[10px] font-bold text-[#222]"><span className="inline-block origin-left scale-x-[.92]">K..</span></span>
        <Cell w="w-[28px]"><Four s={15} /></Cell>
        <Cell w="w-[28px]"><Ico s={15} vb={15}><path d="M8 2H2v11.200h11V7.500M5.500 9.800l.5-2.400L12 1.400l1.900 1.900-6 6z" /></Ico></Cell>
        <Cell w="w-[28px]"><Dots /></Cell>
      </div>
    </aside>
  );
}

/* ---------- right rail ---------- */
const Badge = ({ children }) => (
  <span className="absolute top-[-2px] right-[-1px] flex h-[12px] w-[12px] items-center justify-center rounded-full bg-[#ee444b] text-[8px] font-semibold text-white">{children}</span>
);
const RTool = ({ children, active = false, h = "h-[33.5px]" }) => (
  <div className={`flex w-[30px] shrink-0 items-center justify-center ${h}`}>
    <div className={`relative flex h-[26px] w-[26px] items-center justify-center rounded-[4px] ${active ? "bg-[#ebebeb]" : ""}`}>{children}</div>
  </div>
);
function RightRail() {
  return (
    <aside className="ml-[1px] flex flex-1 flex-col items-center bg-white pt-[1px]">
      <RTool active><Ico><path d="M3.5 2.500h13v15L13 15.300l-3 2.200-3-2.200-3.500 2.200zM6.500 6h7M6.500 9h7M6.500 12h7" /></Ico></RTool>
      <RTool><Ico><circle cx="10" cy="11" r="7" /><path d="M10 7v4.500H7M1.800 6 5 2.800" /></Ico><Badge>3</Badge></RTool>
      <RTool><Ico><path d="M10 3 18.500 7.800 10 12.600 1.500 7.800zM1.500 12l8.500 4.800 8.500-4.800" /></Ico></RTool>
      <RTool><Ico><path d="M2 3h12.500v10H6.500L2 16.500zM17 6.500h1.500V18l-3.500-2.500H8.500V13" /></Ico><Badge>6</Badge></RTool>
      <div className="h-[369.5px] shrink-0" />
      <RTool><Ico s={23} vb={22}><circle cx="11" cy="11" r="9.6" /><circle cx="11" cy="11" r="5.4" /><circle cx="11" cy="11" r="1.3" fill="#333" /><path d="m11 11 6-6" /></Ico></RTool>
      <RTool><Ico s={20}><path d="M1.5 4.500c0-.6.4-1 1-1h15c.6 0 1 .4 1 1v13c0 .6-.4 1-1 1h-15c-.6 0-1-.4-1-1zM1.500 8.500h17" /><circle cx="5.5" cy="3" r="1.5" fill="#fff" /><circle cx="14.5" cy="3" r="1.5" fill="#fff" /></Ico></RTool>
      <RTool h="h-[33px]">
        <svg width="26" height="26" viewBox="0 0 26 26" className="shrink-0"><circle cx="13" cy="13" r="12.4" fill="#262626" /><path d="M7 7h3v3H7zM11.500 7h3v3h-3zM16 7h3v3h-3zM7 11.500h3v3H7zM11.500 11.500h3v3h-3zM16 11.500h3v3h-3zM7 16h3v3H7zM11.500 16h3v3h-3zM16 16h3v3h-3z" fill="#fff" /></svg>
      </RTool>
      <div className="mt-[4px] h-px w-[22px] shrink-0 bg-[#ededef]" />
      <RTool h="h-[38px]"><Ico s={19}><path d="M2 2.500C11 2.500 17.500 9 17.500 18M2 7.500C8.500 7.500 12.500 11.500 12.500 18M2 12.500c3.500 0 5.500 2 5.500 5.500" /><circle cx="3.2" cy="16.8" r="1" /></Ico></RTool>
      <RTool h="h-[28px]"><Ico s={23} vb={22}><path d="M16 3A9.600 9.600 0 0 0 3 16.500M6 19.200A9.600 9.600 0 0 0 19 6.500" /><path d="M8 8.500c0-4 6.300-3.700 6.100 0 0 2.200-3.100 2.300-3.100 4.700M11 16v.4" strokeWidth="1.300" /><path d="m19 1 1.800 1.800L19 4.600l-1.800-1.800z" /><path d="m3 17 1.500 1.500L3 20l-1.500-1.500z" fill="#333" /></Ico></RTool>
    </aside>
  );
}

export default function App() {
  return (
    <div className={`relative flex h-[704px] w-[1260px] flex-col overflow-hidden border-t border-black bg-[#ebebee] ${UI}`}>
      <Header />
      <div className="mt-[2px] flex min-h-0 flex-1">
        <LeftRail />
        <main className="ml-[4px] flex w-[1041px] shrink-0 flex-col">
          <div className="flex h-[586px] shrink-0">
            <LeftChart />
            <RightChart />
          </div>
          <Bottom />
        </main>
        <Watchlist />
        <RightRail />
      </div>
      <div className="absolute top-[645px] left-[540px] h-[22px] w-[22px] rounded-full bg-[#bdeee0]" />
      <div className="absolute top-[588px] left-[162px] flex h-[70px] w-[938px] items-center justify-center rounded-[6px] bg-[#ffd84b]">
        <span className="font-['Noto_Sans_CJK_KR',sans-serif] text-[48px] leading-none font-bold tracking-[-1px] whitespace-nowrap text-black [-webkit-text-stroke:0.4px_#000]">그래서 그는 다양한 매매 전략을 습득해왔습니다</span>
      </div>
      <svg width="10" height="14" viewBox="0 0 10 14" className="absolute top-[656px] left-[549px]">
        <path d="M1.5 1v9.600l2.300-2 1.600 3.800 1.900-.8-1.600-3.600h3z" fill="#fff" stroke="#444" strokeWidth="1" strokeLinejoin="round" />
      </svg>
    </div>
  );
}
